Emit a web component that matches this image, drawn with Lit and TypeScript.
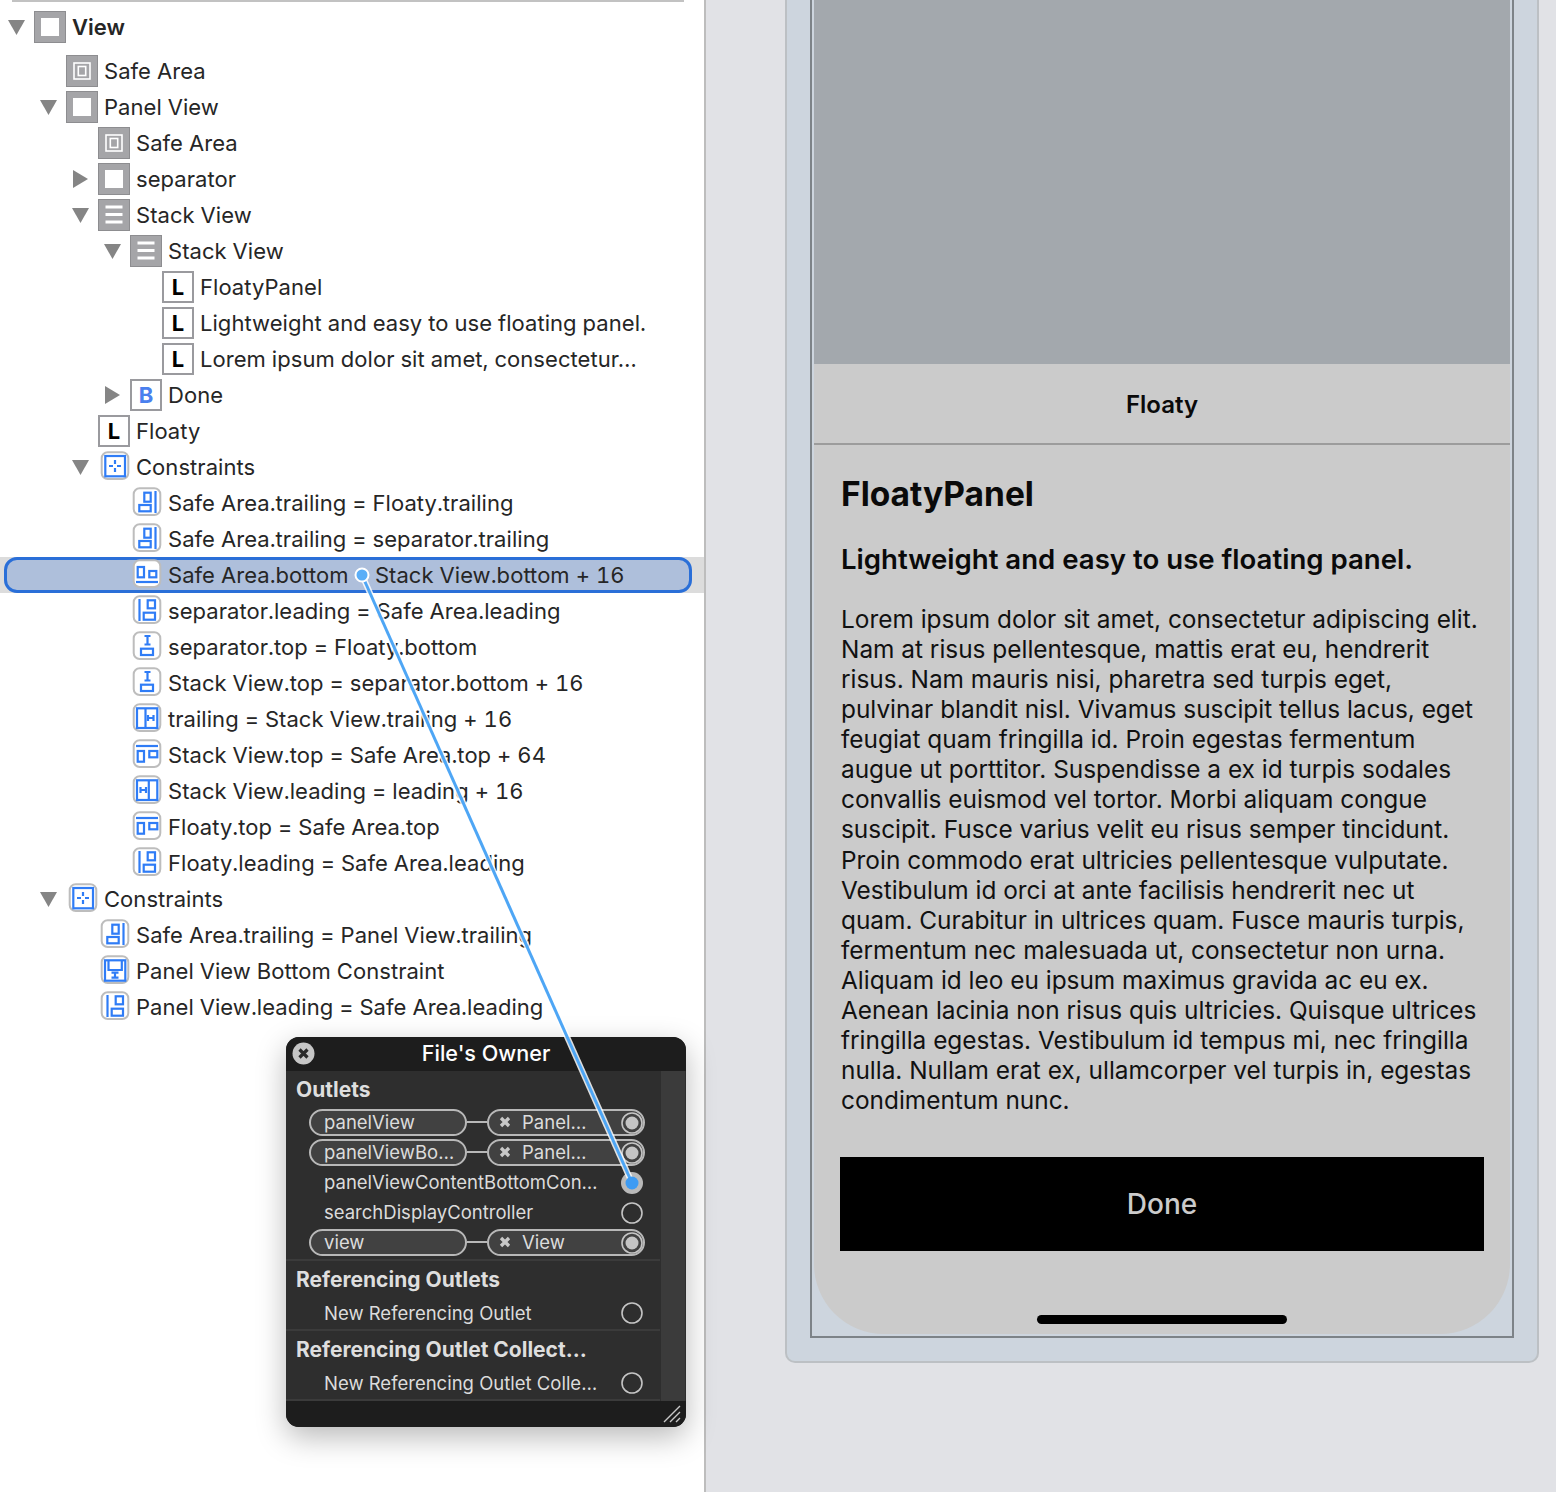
import { LitElement, css, html, svg } from 'lit';
import { customElement } from 'lit/decorators.js';

type Row = { level: number; icon: string; text: string; arrow?: 'down' | 'right'; selected?: boolean };

const rows: Row[] = [
  { level: 1, icon: 'safe', text: 'Safe Area' },
  { level: 1, icon: 'view', text: 'Panel View', arrow: 'down' },
  { level: 2, icon: 'safe', text: 'Safe Area' },
  { level: 2, icon: 'view', text: 'separator', arrow: 'right' },
  { level: 2, icon: 'stack', text: 'Stack View', arrow: 'down' },
  { level: 3, icon: 'stack', text: 'Stack View', arrow: 'down' },
  { level: 4, icon: 'label', text: 'FloatyPanel' },
  { level: 4, icon: 'label', text: 'Lightweight and easy to use floating panel.' },
  { level: 4, icon: 'label', text: 'Lorem ipsum dolor sit amet, consectetur…' },
  { level: 3, icon: 'button', text: 'Done', arrow: 'right' },
  { level: 2, icon: 'label', text: 'Floaty' },
  { level: 2, icon: 'group', text: 'Constraints', arrow: 'down' },
  { level: 3, icon: 'trailing', text: 'Safe Area.trailing = Floaty.trailing' },
  { level: 3, icon: 'trailing', text: 'Safe Area.trailing = separator.trailing' },
  { level: 3, icon: 'bottom', text: 'Safe Area.bottom = Stack View.bottom + 16', selected: true },
  { level: 3, icon: 'leading', text: 'separator.leading = Safe Area.leading' },
  { level: 3, icon: 'vspace', text: 'separator.top = Floaty.bottom' },
  { level: 3, icon: 'vspace', text: 'Stack View.top = separator.bottom + 16' },
  { level: 3, icon: 'inright', text: 'trailing = Stack View.trailing + 16' },
  { level: 3, icon: 'top', text: 'Stack View.top = Safe Area.top + 64' },
  { level: 3, icon: 'inleft', text: 'Stack View.leading = leading + 16' },
  { level: 3, icon: 'top', text: 'Floaty.top = Safe Area.top' },
  { level: 3, icon: 'leading', text: 'Floaty.leading = Safe Area.leading' },
  { level: 1, icon: 'group', text: 'Constraints', arrow: 'down' },
  { level: 2, icon: 'trailing', text: 'Safe Area.trailing = Panel View.trailing' },
  { level: 2, icon: 'inbottom', text: 'Panel View Bottom Constraint' },
  { level: 2, icon: 'leading', text: 'Panel View.leading = Safe Area.leading' },
];

const body = [
  'Lorem ipsum dolor sit amet, consectetur adipiscing elit.',
  'Nam at risus pellentesque, mattis erat eu, hendrerit',
  'risus. Nam mauris nisi, pharetra sed turpis eget,',
  'pulvinar blandit nisl. Vivamus suscipit tellus lacus, eget',
  'feugiat quam fringilla id. Proin egestas fermentum',
  'augue ut porttitor. Suspendisse a ex id turpis sodales',
  'convallis euismod vel tortor. Morbi aliquam congue',
  'suscipit. Fusce varius velit eu risus semper tincidunt.',
  'Proin commodo erat ultricies pellentesque vulputate.',
  'Vestibulum id orci at ante facilisis hendrerit nec ut',
  'quam. Curabitur in ultrices quam. Fusce mauris turpis,',
  'fermentum nec malesuada ut, consectetur non urna.',
  'Aliquam id leo eu ipsum maximus gravida ac eu ex.',
  'Aenean lacinia non risus quis ultricies. Quisque ultrices',
  'fringilla egestas. Vestibulum id tempus mi, nec fringilla',
  'nulla. Nullam erat ex, ullamcorper vel turpis in, egestas',
  'condimentum nunc.',
];

// shapes for the blue constraint glyphs, in the 32 x 32 icon box
const glyphs: Record<string, unknown> = {
  trailing: svg`<rect x="14.300" y="5.700" width="6.400" height="9"/><rect x="9.300" y="18" width="11.400" height="6.300"/><path d="M25.500 4v22"/>`,
  leading: svg`<rect x="17.700" y="5.300" width="7.300" height="8"/><rect x="13.700" y="17.700" width="11.300" height="7"/><path d="M9.500 4v22"/>`,
  bottom: svg`<rect x="7.700" y="8" width="6.300" height="10.300"/><rect x="19.300" y="12" width="7" height="6.300"/><path d="M6 23h22"/>`,
  top: svg`<rect x="7.700" y="12" width="6.300" height="10.700"/><rect x="19.300" y="12" width="8" height="6.300"/><path d="M6 7h22"/>`,
  vspace: svg`<path d="M14.500 5h6M17.500 5v9M14.500 13.500h6"/><rect x="11" y="17.700" width="12" height="6.300"/>`,
  inright: svg`<rect x="7" y="5.300" width="20.300" height="19.700"/><path d="M15.500 5.300v19.700M18 12v6M18 15h5.500M23.500 12v6"/>`,
  inleft: svg`<rect x="7" y="5.300" width="20.300" height="19.700"/><path d="M18.800 5.300v19.700M10.500 12v6M10.500 15h5.500M16 12v6"/>`,
  inbottom: svg`<rect x="7" y="5.300" width="20.300" height="20.400"/><path d="M10.500 5.300v9.700h13.300V5.300M13.500 17.700h7M17 17.700v5M13.500 22.700h7"/>`,
  group: svg`<rect x="7.300" y="5" width="19.700" height="20.300"/><path d="M17 9v4M17 17v4M11 15h4M19 15h4"/>`,
};

@customElement('app-root')
export class AppRoot extends LitElement {
  static styles = css`
    :host {
      display: block;
      position: relative;
      height: 1492px;
      overflow: hidden;
      background: #e1e2e6;
      font-family: Inter, 'Liberation Sans', sans-serif;
    }

    .layout {
      display: flex;
      height: 100%;
    }

    /* outline column */
    .outline {
      position: relative;
      box-sizing: border-box;
      width: 706px;
      height: 100%;
      flex: none;
      background: #fff;
      border-right: 2px solid #bdbdbd;
      padding-top: 9px;
    }

    .top-rule {
      position: absolute;
      left: 12px;
      top: 0;
      width: 672px;
      height: 2px;
      background: #c2c2c2;
    }

    .row {
      position: relative;
      display: flex;
      align-items: center;
      height: 36px;
      font-size: 22px;
      font-feature-settings: 'tnum';
      letter-spacing: 0.05px;
      color: #262626;
      white-space: nowrap;
    }

    .row.root {
      margin-bottom: 8px;
      font-weight: 600;
    }

    .row.selected {
      background: #dcdcdc;
    }

    .row.selected::before {
      content: '';
      position: absolute;
      left: 4px;
      top: 0;
      width: 688px;
      height: 36px;
      box-sizing: border-box;
      border: 3px solid #2a6fd8;
      border-radius: 13px;
      background: #aebfdb;
    }

    .row > * {
      position: relative;
    }

    .arrow {
      width: 26px;
      flex: none;
      display: flex;
      justify-content: flex-start;
    }

    .arrow svg {
      display: block;
      fill: #858585;
    }

    .icon {
      display: block;
      flex: none;
      width: 32px;
      height: 32px;
      margin-right: 6px;
    }

    /* inspector popup */
    .popup {
      position: absolute;
      left: 286px;
      top: 1037px;
      box-sizing: border-box;
      width: 400px;
      height: 390px;
      display: flex;
      flex-direction: column;
      overflow: hidden;
      border-radius: 13px;
      background: #2e2e2e;
      box-shadow: 0 10px 30px rgba(0, 0, 0, 0.28);
      color: #dcdcdc;
    }

    .popup-title {
      position: relative;
      flex: none;
      box-sizing: border-box;
      height: 34px;
      padding-bottom: 2px;
      display: flex;
      align-items: center;
      justify-content: center;
      background: #1d1d1d;
      color: #fff;
      font-size: 21.6px;
      font-weight: 500;
    }

    .popup-title svg {
      position: absolute;
      left: 6px;
      top: 5px;
    }

    .popup-main {
      flex: 1;
      display: flex;
      min-height: 0;
    }

    .sections {
      flex: none;
      width: 374px;
    }

    .scroller {
      flex: none;
      width: 24px;
      margin-left: 1px;
      background: #3b3b3b;
    }

    .section {
      box-sizing: border-box;
      border-bottom: 2px solid #3b3b3b;
      padding: 4px 0 1px;
    }

    .section.first {
      padding-bottom: 2px;
    }

    .section h3 {
      box-sizing: border-box;
      margin: 0 0 3px 10px;
      height: 30px;
      padding-bottom: 2px;
      display: flex;
      align-items: center;
      font-size: 21px;
      font-weight: 700;
      color: #dedede;
      white-space: nowrap;
    }

    .section.first h3 {
      margin-bottom: 2px;
    }

    .outlet {
      position: relative;
      box-sizing: border-box;
      height: 30px;
      margin-left: 23px;
      width: 336px;
      display: flex;
      align-items: center;
      font-size: 18.500px;
      white-space: nowrap;
    }

    .name {
      padding-left: 15px;
    }

    .pill {
      box-sizing: border-box;
      height: 27px;
      display: flex;
      align-items: center;
      border: 2px solid #b8b8b8;
      border-radius: 14px;
      background: #414141;
    }

    .pill.left {
      width: 158px;
      padding-left: 13px;
    }

    .pill.right {
      width: 158px;
      padding-left: 10px;
      gap: 11px;
    }

    .wire {
      width: 20px;
      height: 2px;
      background: #b8b8b8;
    }

    .port {
      position: absolute;
      right: 2px;
      top: 5px;
      display: block;
      width: 22px;
      height: 22px;
    }

    .section:not(.first) .port {
      top: 4px;
    }

    .footer {
      position: relative;
      flex: none;
      height: 26px;
      background: #1d1d1d;
    }

    .footer svg {
      position: absolute;
      right: 5px;
      bottom: 4px;
    }

    /* canvas column */
    .canvas {
      flex: 1;
      padding-left: 79px;
    }

    .device {
      box-sizing: border-box;
      width: 754px;
      height: 1363px;
      padding-left: 23px;
      background: #cdd5de;
      border: 2px solid #bcc0c4;
      border-top: 0;
      border-radius: 0 0 10px 10px;
    }

    .frame {
      box-sizing: border-box;
      width: 704px;
      height: 1338px;
      padding: 0 2px 2px;
      border: 2px solid #7d8388;
      border-top: 0;
    }

    .screen {
      position: relative;
      height: 1334px;
      display: flex;
      flex-direction: column;
      overflow: hidden;
      background: #cbcbcb;
      border-radius: 0 0 70px 70px;
      color: #0a0a0a;
    }

    .dim {
      flex: none;
      height: 364px;
      background: #a3a8ad;
    }

    .nav {
      flex: none;
      box-sizing: border-box;
      height: 81px;
      padding-top: 2px;
      display: flex;
      align-items: center;
      justify-content: center;
      border-bottom: 2px solid #9c9c9c;
      font-size: 24px;
      font-weight: 600;
    }

    .content {
      padding: 0 26px 0 27px;
    }

    .content h1 {
      margin: 27px 0 0;
      height: 44px;
      line-height: 44px;
      font-size: 33.500px;
      font-weight: 700;
      white-space: nowrap;
    }

    .content h2 {
      margin: 23px 0 0;
      height: 40px;
      line-height: 40px;
      font-size: 27.600px;
      font-weight: 600;
      white-space: nowrap;
    }

    .content p {
      margin: 25px 0 0;
      font-size: 24.400px;
      line-height: 30.060px;
      white-space: nowrap;
      color: #111;
    }

    .done {
      margin: 42px 0 0 -1px;
      height: 94px;
      display: flex;
      align-items: center;
      justify-content: center;
      background: #000;
      color: #cbcbcb;
      font-size: 28px;
      font-weight: 500;
    }

    .home {
      position: absolute;
      left: 223px;
      bottom: 10px;
      width: 250px;
      height: 9px;
      border-radius: 5px;
      background: #000;
    }

    /* drag line over everything */
    .drag {
      position: absolute;
      left: 0;
      top: 0;
      pointer-events: none;
    }
  `;

  renderIcon(kind: string) {
    if (kind === 'label' || kind === 'button') {
      return html`<svg class="icon" viewBox="0 0 32 32">
        <rect x="1" y="1" width="30" height="30" fill="#fff" stroke="#9a9a9e" stroke-width="2" />
        <text
          x="16"
          y="24"
          text-anchor="middle"
          font-family="Inter, sans-serif"
          font-size="22"
          font-weight="700"
          fill=${kind === 'button' ? '#4a80ee' : '#000'}
        >
          ${kind === 'button' ? 'B' : 'L'}
        </text>
      </svg>`;
    }
    if (kind === 'view' || kind === 'safe' || kind === 'stack') {
      return html`<svg class="icon" viewBox="0 0 32 32">
        <rect x="0.500" y="0.500" width="31" height="31" fill="#a5a5a8" stroke="#8d8d90" />
        ${kind === 'view' ? svg`<rect x="7" y="7" width="18" height="18" fill="#fff" />` : ''}
        ${kind === 'safe'
          ? svg`<rect x="8" y="8" width="16" height="16" fill="none" stroke="#fff" stroke-width="1.600"/><rect x="12.300" y="11.500" width="7.400" height="9" fill="none" stroke="#fff" stroke-width="1.600"/>`
          : ''}
        ${kind === 'stack'
          ? svg`<path d="M7.500 8h17M7.500 15.500h17M7.500 23h17" stroke="#fff" stroke-width="3" />`
          : ''}
      </svg>`;
    }
    return html`<svg class="icon" viewBox="0 0 32 32">
      <rect x="3.700" y="1.300" width="26.600" height="26.700" rx="6" fill="#fff" stroke="#bdbdbd" stroke-width="2" />
      <g fill="none" stroke="#2f7cf6" stroke-width="2.200">${glyphs[kind]}</g>
    </svg>`;
  }

  renderRow(row: Row) {
    const pad = 8 + (row.level - 1) * 32 + 32;
    return html`<div class="row ${row.selected ? 'selected' : ''}" style="padding-left: ${pad}px">
      <span class="arrow">
        ${row.arrow === 'down'
          ? html`<svg width="17" height="15"><path d="M0 0h17l-8.500 15z" /></svg>`
          : row.arrow === 'right'
            ? html`<svg width="15" height="18" style="margin-left: 1px"><path d="M0 0l15 9-15 9z" /></svg>`
            : ''}
      </span>
      ${this.renderIcon(row.icon)}
      <span>${row.text}</span>
    </div>`;
  }

  renderPort(state: 'open' | 'full' | 'drag') {
    return html`<svg class="port" viewBox="0 0 22 22">
      ${state === 'drag' ? svg`<circle cx="11" cy="11" r="11" fill="#b9b9b9"/>` : ''}
      ${state !== 'drag' ? svg`<circle cx="11" cy="11" r="10" fill="none" stroke="#c4c4c4" stroke-width="1.600"/>` : ''}
      ${state === 'full' ? svg`<circle cx="11" cy="11" r="6.500" fill="#c4c4c4"/>` : ''}
    </svg>`;
  }

  renderLinked(name: string, target: string) {
    return html`<div class="outlet">
      <span class="pill left">${name}</span>
      <span class="wire"></span>
      <span class="pill right">
        <svg width="12" height="12" viewBox="0 0 12 12">
          <path d="M2 2l8 8M10 2l-8 8" stroke="#c8c8c8" stroke-width="3.400" />
        </svg>
        ${target}
      </span>
      ${this.renderPort('full')}
    </div>`;
  }

  renderOpen(name: string, state: 'open' | 'drag' = 'open') {
    return html`<div class="outlet"><span class="name">${name}</span>${this.renderPort(state)}</div>`;
  }

  render() {
    return html`
      <div class="layout">
        <section class="outline">
          <div class="top-rule"></div>
          <div class="row root" style="padding-left: 8px">
            <span class="arrow"><svg width="17" height="15"><path d="M0 0h17l-8.500 15z" /></svg></span>
            ${this.renderIcon('view')}
            <span>View</span>
          </div>
          ${rows.map((row) => this.renderRow(row))}

          <div class="popup">
            <div class="popup-title">
              <svg width="23" height="23" viewBox="0 0 23 23">
                <circle cx="11.500" cy="11.500" r="11" fill="#c6c6c6" />
                <path d="M7.500 7.500l8 8M15.500 7.500l-8 8" stroke="#2a2a2a" stroke-width="3.200" />
              </svg>
              File's Owner
            </div>
            <div class="popup-main">
              <div class="sections">
                <div class="section first">
                  <h3>Outlets</h3>
                  ${this.renderLinked('panelView', 'Panel…')}
                  ${this.renderLinked('panelViewBo…', 'Panel…')}
                  ${this.renderOpen('panelViewContentBottomCon…', 'drag')}
                  ${this.renderOpen('searchDisplayController')}
                  ${this.renderLinked('view', 'View')}
                </div>
                <div class="section">
                  <h3>Referencing Outlets</h3>
                  ${this.renderOpen('New Referencing Outlet')}
                </div>
                <div class="section">
                  <h3>Referencing Outlet Collect…</h3>
                  ${this.renderOpen('New Referencing Outlet Colle…')}
                </div>
              </div>
              <div class="scroller"></div>
            </div>
            <div class="footer">
              <svg width="18" height="18" viewBox="0 0 18 18">
                <path d="M1 17L17 1M7 17L17 7M13 17l4-4" stroke="#c8c8c8" stroke-width="1.400" />
              </svg>
            </div>
          </div>
        </section>

        <section class="canvas">
          <div class="device">
            <div class="frame">
              <div class="screen">
                <div class="dim"></div>
                <div class="nav">Floaty</div>
                <div class="content">
                  <h1>FloatyPanel</h1>
                  <h2>Lightweight and easy to use floating panel.</h2>
                  <p>${body.map((line) => html`${line}<br />`)}</p>
                  <div class="done">Done</div>
                </div>
                <div class="home"></div>
              </div>
            </div>
          </div>
        </section>
      </div>

      <svg class="drag" width="1556" height="1492">
        <path d="M362 575L632 1183" stroke="#fff" stroke-width="6" opacity="0.85" />
        <path d="M362 575L632 1183" stroke="#4ea6f5" stroke-width="3" />
        <circle cx="362" cy="575" r="6.500" fill="#5aaef7" stroke="#fff" stroke-width="2" />
        <circle cx="632" cy="1183" r="6.500" fill="#3d9bf3" />
      </svg>
    `;
  }
}
